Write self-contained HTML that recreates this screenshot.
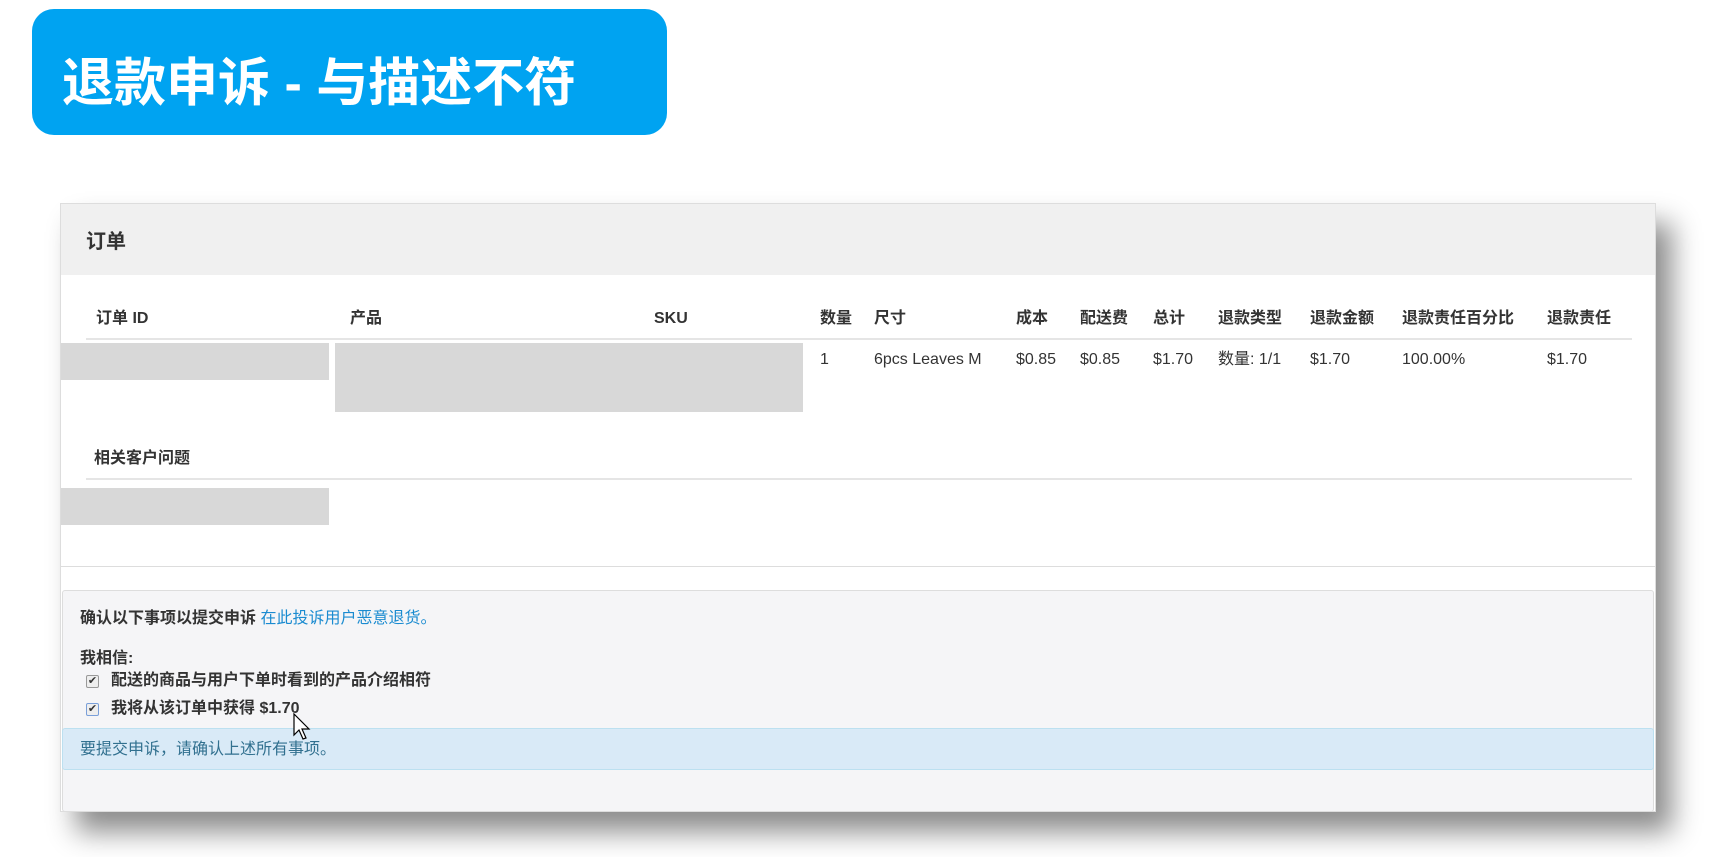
<!DOCTYPE html>
<html><head><meta charset="utf-8"><style>
*{margin:0;padding:0;box-sizing:border-box}
body{width:1722px;height:857px;background:#fff;position:relative;overflow:hidden;font-family:"Liberation Sans","Noto Sans CJK SC",sans-serif;color:#333}
.a{position:absolute;white-space:nowrap;line-height:20px}
.title{left:32px;top:9px;width:635px;height:126px;background:#00a3f1;border-radius:22px}
.title span{position:absolute;left:30px;top:47px;font-size:52px;line-height:56px;color:#fff;font-weight:bold;letter-spacing:0}
.panel{left:60px;top:203px;width:1596px;height:609px;background:#fff;border:1px solid #ddd;box-shadow:16px 20px 26px rgba(0,0,0,.45)}
.hdr{left:61px;top:204px;width:1594px;height:71px;background:#f0f0f0}
.th{font-size:16px;font-weight:bold;top:309px}
.td{font-size:16px;top:350px}
.gray{background:#d8d8d8}
.line{height:2px;background:#e5e5e5}
.p2{left:62px;top:590px;width:1592px;height:222px;background:#f5f5f7;border:1px solid #ddd;border-radius:3px}
.cb{width:13px;height:13px;border:1px solid #999;border-radius:2px;background:#eee;font-size:11px;line-height:11px;text-align:center}
</style></head><body>
<div class="a title"><span>退款申诉 - 与描述不符</span></div>
<div class="a panel"></div>
<div class="a hdr"></div>
<div class="a" style="left:86px;top:232px;font-size:20px;font-weight:bold">订单</div>
<div class="a th" style="left:96px">订单 ID</div>
<div class="a th" style="left:350px">产品</div>
<div class="a th" style="left:654px">SKU</div>
<div class="a th" style="left:820px">数量</div>
<div class="a th" style="left:874px">尺寸</div>
<div class="a th" style="left:1016px">成本</div>
<div class="a th" style="left:1080px">配送费</div>
<div class="a th" style="left:1153px">总计</div>
<div class="a th" style="left:1218px">退款类型</div>
<div class="a th" style="left:1310px">退款金额</div>
<div class="a th" style="left:1402px">退款责任百分比</div>
<div class="a th" style="left:1547px">退款责任</div>
<div class="a line" style="left:86px;top:338px;width:1546px"></div>
<div class="a gray" style="left:61px;top:343px;width:268px;height:37px"></div>
<div class="a gray" style="left:335px;top:343px;width:468px;height:69px"></div>
<div class="a td" style="left:820px">1</div>
<div class="a td" style="left:874px">6pcs Leaves M</div>
<div class="a td" style="left:1016px">$0.85</div>
<div class="a td" style="left:1080px">$0.85</div>
<div class="a td" style="left:1153px">$1.70</div>
<div class="a td" style="left:1218px">数量: 1/1</div>
<div class="a td" style="left:1310px">$1.70</div>
<div class="a td" style="left:1402px">100.00%</div>
<div class="a td" style="left:1547px">$1.70</div>
<div class="a" style="left:94px;top:449px;font-size:16px;font-weight:bold">相关客户问题</div>
<div class="a line" style="left:86px;top:478px;width:1546px"></div>
<div class="a gray" style="left:61px;top:488px;width:268px;height:37px"></div>
<div class="a" style="left:61px;top:566px;width:1594px;height:1px;background:#ddd"></div>
<div class="a p2"></div>
<div class="a" style="left:80px;top:609px;font-size:16px;font-weight:bold">确认以下事项以提交申诉 <span style="font-weight:normal;color:#1a8bd0">在此投诉用户恶意退货。</span></div>
<div class="a" style="left:80px;top:649px;font-size:16px;font-weight:bold">我相信:</div>
<div class="a cb" style="left:86px;top:675px">✔</div>
<div class="a" style="left:111px;top:671px;font-size:16px;font-weight:bold">配送的商品与用户下单时看到的产品介绍相符</div>
<div class="a cb" style="left:86px;top:703px;border-color:#7a9fd9">✔</div>
<div class="a" style="left:111px;top:699px;font-size:16px;font-weight:bold">我将从该订单中获得 $1.70</div>
<div class="a" style="left:62px;top:728px;width:1592px;height:42px;background:#d9eaf7;border:1px solid #bce0f0;border-radius:3px"></div>
<div class="a" style="left:80px;top:740px;font-size:16px;color:#31708f">要提交申诉，请确认上述所有事项。</div>
<svg class="a" style="left:293px;top:713px" width="20" height="30" viewBox="0 0 20 30"><path d="M1 1 L1 22 L6 17 L10 26 L13 25 L9 16 L16 16 Z" fill="#fff" stroke="#000" stroke-width="1.2"/></svg>
</body></html>
